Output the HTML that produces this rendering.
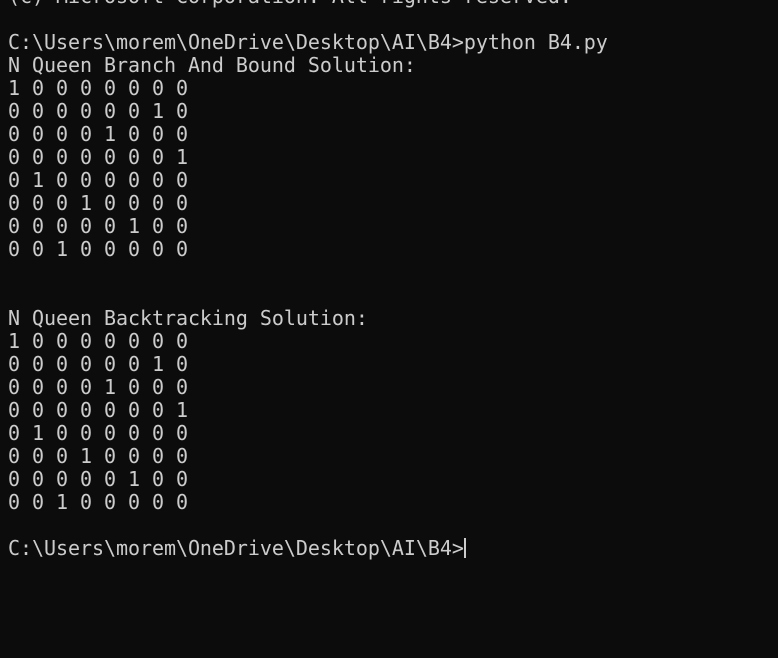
<!DOCTYPE html>
<html><head><meta charset="utf-8"><style>
html,body{margin:0;padding:0;background:#0c0c0c;width:778px;height:658px;overflow:hidden}
pre{position:absolute;left:8px;top:-15px;margin:0;font-family:"DejaVu Sans Mono","Liberation Mono",monospace;font-size:20px;letter-spacing:-0.045px;line-height:23px;color:#cccccc;white-space:pre}
.cur{display:inline-block;width:2px;height:20px;background:#cccccc;vertical-align:-3px}
</style></head><body><pre>(c) Microsoft Corporation. All rights reserved.

C:\Users\morem\OneDrive\Desktop\AI\B4>python B4.py
N Queen Branch And Bound Solution:
1 0 0 0 0 0 0 0
0 0 0 0 0 0 1 0
0 0 0 0 1 0 0 0
0 0 0 0 0 0 0 1
0 1 0 0 0 0 0 0
0 0 0 1 0 0 0 0
0 0 0 0 0 1 0 0
0 0 1 0 0 0 0 0


N Queen Backtracking Solution:
1 0 0 0 0 0 0 0
0 0 0 0 0 0 1 0
0 0 0 0 1 0 0 0
0 0 0 0 0 0 0 1
0 1 0 0 0 0 0 0
0 0 0 1 0 0 0 0
0 0 0 0 0 1 0 0
0 0 1 0 0 0 0 0

C:\Users\morem\OneDrive\Desktop\AI\B4&gt;<span class="cur"></span></pre></body></html>
